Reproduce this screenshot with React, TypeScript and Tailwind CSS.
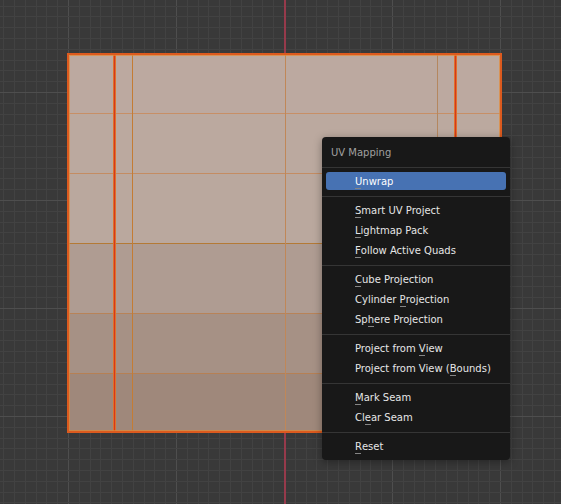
import React from 'react';

type Item = { label: string; key: number; active?: boolean };

const sections: Item[][] = [
  [{ label: 'Unwrap', key: 0, active: true }],
  [
    { label: 'Smart UV Project', key: 0 },
    { label: 'Lightmap Pack', key: 0 },
    { label: 'Follow Active Quads', key: 0 },
  ],
  [
    { label: 'Cube Projection', key: 0 },
    { label: 'Cylinder Projection', key: 9 },
    { label: 'Sphere Projection', key: 2 },
  ],
  [
    { label: 'Project from View', key: 13 },
    { label: 'Project from View (Bounds)', key: 19 },
  ],
  [
    { label: 'Mark Seam', key: 0 },
    { label: 'Clear Seam', key: 2 },
  ],
  [{ label: 'Reset', key: 0 }],
];

const cols = Array.from({ length: 52 }, (_, i) => i);
const rows = Array.from({ length: 47 }, (_, j) => j);

function Viewport() {
  return (
    <svg width="561" height="504" viewBox="0 0 561 504" className="block">
      <rect width="561" height="504" fill="#393939" />
      {cols.map((i) => {
        const x = Math.round(3.2 + 10.8 * i);
        const major = (i - 6) % 10 === 0;
        return (
          <rect key={'x' + i} x={x} y={0} width={1} height={504} fill={major ? '#4e4e4e' : '#424242'} />
        );
      })}
      {rows.map((j) => {
        const y = Math.round(5.6 + 10.8 * j);
        const major = (j - 8) % 10 === 0;
        return (
          <rect key={'y' + j} x={0} y={y} width={561} height={1} fill={major ? '#4e4e4e' : '#424242'} />
        );
      })}
      {/* v axis */}
      <rect x={284} y={0} width={2} height={504} fill="#963a4b" />

      {/* uv faces */}
      <rect x={68} y={54} width={433} height={60} fill="#bca9a0" />
      <rect x={68} y={114} width={433} height={60} fill="#bba99f" />
      <rect x={68} y={174} width={433} height={70} fill="#baa89e" />
      <rect x={68} y={244} width={433} height={70} fill="#af9c92" />
      <rect x={68} y={314} width={433} height={60} fill="#a69185" />
      <rect x={68} y={374} width={433} height={58} fill="#9f887b" />

      {/* horizontal edges */}
      <rect x={69} y={113} width={431} height={1} fill="#c78f66" />
      <rect x={69} y={173} width={431} height={1} fill="#c48c62" />
      <rect x={69} y={243} width={431} height={1} fill="#b47a36" />
      <rect x={69} y={313} width={431} height={1} fill="#b88358" />
      <rect x={69} y={373} width={431} height={1} fill="#b68054" />

      {/* vertical edges */}
      <rect x={132} y={55} width={1} height={376} fill="#c47c34" />
      <rect x={285} y={55} width={1} height={376} fill="#c08758" />
      <rect x={437} y={55} width={1} height={376} fill="#b4875f" />
      <rect x={113} y={54} width={3} height={378} fill="#e0702a" />
      <rect x={114} y={54} width={1} height={378} fill="#d4381c" />
      <rect x={454} y={54} width={3} height={378} fill="#e0702a" />
      <rect x={455} y={54} width={1} height={378} fill="#d4381c" />

      {/* outer border */}
      <rect x={68} y={54} width={433} height={378} fill="none" stroke="#dc5a1e" strokeWidth={2} />
      <rect x={69.5} y={55.5} width={430} height={375} fill="none" stroke="#e48a34" strokeWidth={1} opacity={0.7} />
    </svg>
  );
}

function Label({ text, k }: { text: string; k: number }) {
  return (
    <span className="whitespace-pre">
      {text.slice(0, k)}
      <span className="relative">
        {text[k]}
        <span className="absolute left-0 bottom-[-2px] h-px w-[6px] bg-[#858585]" />
      </span>
      {text.slice(k + 1)}
    </span>
  );
}

function Separator() {
  return (
    <div className="pt-[5px] pb-[3px]">
      <div className="h-px bg-[#353535]" />
    </div>
  );
}

function Menu() {
  return (
    <div className="absolute left-[322px] top-[137px] w-[188px] rounded-[4px] bg-[#181818] pb-[4px] shadow-[0_2px_8px_rgba(0,0,0,0.35)] font-['DejaVu_Sans',sans-serif] text-[10px] leading-none">
      <div className="h-[25px] pt-[7px] pl-[9px] flex items-center text-[#a0a0a0]">UV Mapping</div>
      {sections.map((items, s) => (
        <div key={s}>
          <Separator />
          {items.map((it) => (
            <div key={it.label} className="h-[20px] py-[1px] px-[4px]">
              <div
                className={`h-full flex items-center pt-[2px] pl-[29px] rounded-[3px] ${
                  it.active ? 'bg-[#4772b3] text-white' : 'text-[#e6e6e6]'
                }`}
              >
                <Label text={it.label} k={it.key} />
              </div>
            </div>
          ))}
        </div>
      ))}
    </div>
  );
}

export default function App() {
  return (
    <div className="relative w-[561px] h-[504px] overflow-hidden bg-[#393939]">
      <Viewport />
      <Menu />
    </div>
  );
}
